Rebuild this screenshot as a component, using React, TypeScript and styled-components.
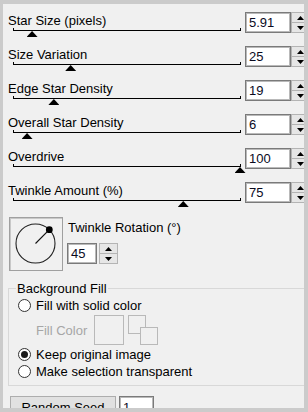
import React from "react";
import styled, { createGlobalStyle } from "styled-components";

const Global = createGlobalStyle`
  html, body { margin: 0; padding: 0; }
  body {
    background: #cbcbcb;
    font-family: "Liberation Sans", Arial, sans-serif;
    font-size: 13px;
    color: #000;
  }
`;

const Panel = styled.div`
  margin: 4px 0 0 3px;
  width: 301px;
  height: 404px;
  background: #f0f0f0;
  overflow: hidden;
`;

const SliderList = styled.div`
  display: flex;
  flex-direction: column;
  padding-top: 8px;
`;

const SliderRow = styled.div`
  display: flex;
  align-items: flex-start;
  height: 34px;
`;

const SliderBlock = styled.div`
  display: flex;
  flex-direction: column;
  width: 233px;
  margin-left: 5px;
  flex-shrink: 0;
`;

const SliderLabel = styled.div`
  margin-top: 1px;
  line-height: 15px;
  white-space: nowrap;
`;

const Track = styled.div`
  position: relative;
  box-sizing: border-box;
  margin-left: 5px;
  width: 228px;
  height: 3px;
  border: 1px solid #000;
  border-top: none;
`;

const Thumb = styled.div`
  position: absolute;
  top: 3px;
  width: 11px;
  height: 6px;
  background: #000;
  clip-path: polygon(50% 0, 100% 100%, 0 100%);
`;

const ValueField = styled.div<{ $w: number }>`
  box-sizing: border-box;
  flex-shrink: 0;
  width: ${(p) => p.$w}px;
  height: 21px;
  border: 1px solid #7a7a7a;
  box-shadow: inset 0 0 0 1px #b9b9b9;
  background: #fff;
  padding-left: 3px;
  line-height: 19px;
  color: #0a0a1e;
  white-space: nowrap;
`;

const Spin = styled.div<{ $gap: number }>`
  display: flex;
  flex-direction: column;
  flex-shrink: 0;
  width: 19px;
  height: 21px;
  margin-left: ${(p) => p.$gap}px;
`;

const SpinButton = styled.div`
  box-sizing: border-box;
  flex: 1;
  display: flex;
  align-items: center;
  justify-content: center;
  border: 1px solid #b4b4b4;
  background: #e6e6e6;
  & + & {
    border-top: none;
  }
`;

const SliderValue = styled.div`
  display: flex;
  margin-left: 4px;
`;

const RotationRow = styled.div`
  display: flex;
  margin: 1px 0 0 6px;
`;

const Dial = styled.div`
  box-sizing: border-box;
  width: 54px;
  height: 54px;
  border: 1px solid #a0a0a0;
  box-shadow: inset 1px 1px 0 #c8c8c8;
  flex-shrink: 0;
`;

const RotationControls = styled.div`
  display: flex;
  flex-direction: column;
  margin-left: 4px;
`;

const RotationLabel = styled.div`
  margin-top: 3px;
  padding-left: 1px;
  line-height: 15px;
  white-space: nowrap;
`;

const RotationInput = styled.div`
  display: flex;
  margin-top: 8px;
`;

const Group = styled.fieldset`
  box-sizing: border-box;
  margin: 10px 0 0 5px;
  min-width: 0;
  width: 330px;
  border: 1px solid #d8d8d8;
  padding: 2px 0 6px 9px;
  display: flex;
  flex-direction: column;
  gap: 2px;
`;

const Legend = styled.legend`
  margin-left: -2px;
  padding: 0 1px;
  line-height: 15px;
`;

const RadioRow = styled.div`
  display: flex;
  align-items: center;
  gap: 5px;
  height: 15px;
  line-height: 15px;
  white-space: nowrap;
`;

const Radio = styled.span<{ $on?: boolean }>`
  position: relative;
  box-sizing: border-box;
  width: 13px;
  height: 13px;
  border-radius: 50%;
  border: 1px solid #333;
  background: #fff;
  flex-shrink: 0;
  &::after {
    content: "";
    display: ${(p) => (p.$on ? "block" : "none")};
    position: absolute;
    left: 2px;
    top: 2px;
    width: 7px;
    height: 7px;
    border-radius: 50%;
    background: #1a1a1a;
  }
`;

const FillRow = styled.div`
  display: flex;
  align-items: center;
  height: 30px;
  padding-left: 18px;
`;

const FillLabel = styled.span`
  color: #a6a6a6;
  line-height: 15px;
  white-space: nowrap;
`;

const ColorBox = styled.div`
  box-sizing: border-box;
  width: 30px;
  height: 30px;
  margin-left: 7px;
  border: 1px solid #b9b9b9;
`;

const SwapIcon = styled.svg`
  margin-left: 4px;
  display: block;
`;

const BottomRow = styled.div`
  display: flex;
  margin: 10px 0 0 7px;
`;

const Button = styled.div`
  box-sizing: border-box;
  width: 106px;
  height: 24px;
  border: 1px solid #adadad;
  background: #e1e1e1;
  text-align: center;
  line-height: 21px;
  white-space: nowrap;
`;

const SeedField = styled(ValueField)`
  margin-left: 3px;
  height: 24px;
  line-height: 22px;
`;

const Arrow = ({ up }: { up?: boolean }) => (
  <svg width="7" height="4" viewBox="0 0 7 4">
    <polygon points={up ? "3.5,0 7,4 0,4" : "0,0 7,0 3.5,4"} fill="#000" />
  </svg>
);

const SpinBox = ({ gap }: { gap: number }) => (
  <Spin $gap={gap}>
    <SpinButton>
      <Arrow up />
    </SpinButton>
    <SpinButton>
      <Arrow />
    </SpinButton>
  </Spin>
);

const sliders = [
  { label: "Star Size (pixels)", value: "5.91", frac: 0.084 },
  { label: "Size Variation", value: "25", frac: 0.254 },
  { label: "Edge Star Density", value: "19", frac: 0.18 },
  { label: "Overall Star Density", value: "6", frac: 0.062 },
  { label: "Overdrive", value: "100", frac: 1 },
  { label: "Twinkle Amount (%)", value: "75", frac: 0.75 },
];

export default function App() {
  return (
    <>
      <Global />
      <Panel>
        <SliderList>
          {sliders.map((s) => (
            <SliderRow key={s.label}>
              <SliderBlock>
                <SliderLabel>{s.label}</SliderLabel>
                <Track>
                  <Thumb style={{ left: `${s.frac * 227 - 6.5}px` }} />
                </Track>
              </SliderBlock>
              <SliderValue>
                <ValueField $w={46}>{s.value}</ValueField>
                <SpinBox gap={0} />
              </SliderValue>
            </SliderRow>
          ))}
        </SliderList>

        <RotationRow>
          <Dial>
            <svg width="52" height="52" viewBox="0 0 52 52">
              <circle cx="25.5" cy="25.5" r="19.5" fill="none" stroke="#222" strokeWidth="1.1" />
              <line x1="25.5" y1="25.5" x2="39.3" y2="11.7" stroke="#111" strokeWidth="1.1" />
              <circle cx="39.3" cy="11.7" r="3.4" fill="#000" />
            </svg>
          </Dial>
          <RotationControls>
            <RotationLabel>Twinkle Rotation (°)</RotationLabel>
            <RotationInput>
              <ValueField $w={30}>45</ValueField>
              <SpinBox gap={2} />
            </RotationInput>
          </RotationControls>
        </RotationRow>

        <Group>
          <Legend>Background Fill</Legend>
          <RadioRow>
            <Radio />
            Fill with solid color
          </RadioRow>
          <FillRow>
            <FillLabel>Fill Color</FillLabel>
            <ColorBox />
            <SwapIcon width="30" height="30" viewBox="0 0 30 30">
              <rect x="0.5" y="0.5" width="17" height="18" fill="#f0f0f0" stroke="#b9b9b9" />
              <rect x="12.5" y="12.5" width="17" height="17" fill="#f0f0f0" stroke="#b9b9b9" />
            </SwapIcon>
          </FillRow>
          <RadioRow>
            <Radio $on />
            Keep original image
          </RadioRow>
          <RadioRow>
            <Radio />
            Make selection transparent
          </RadioRow>
        </Group>

        <BottomRow>
          <Button>Random Seed</Button>
          <SeedField $w={35}>1</SeedField>
        </BottomRow>
      </Panel>
    </>
  );
}
